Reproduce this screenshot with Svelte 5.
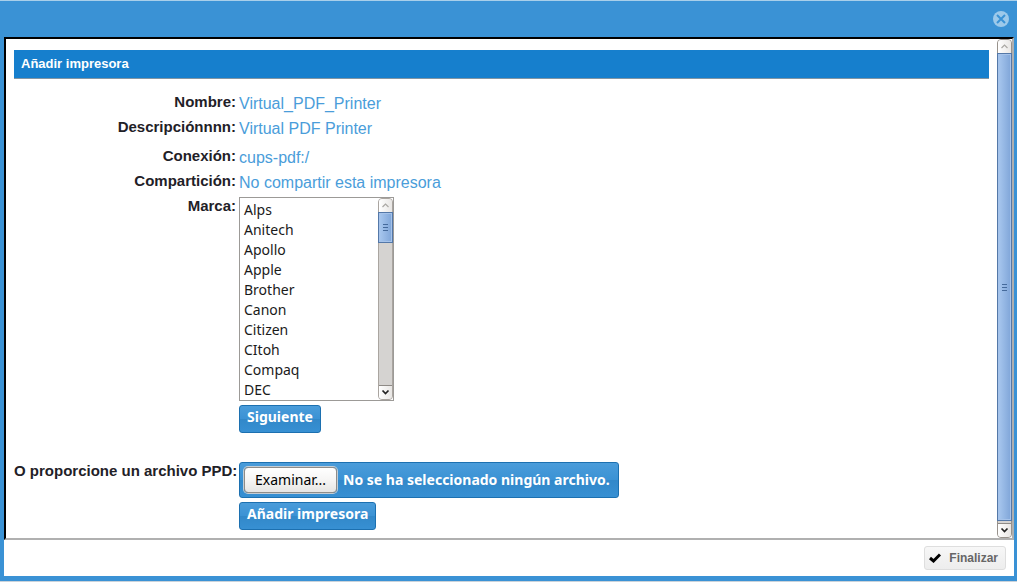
<script>
  const details = [
    { label: 'Nombre:', value: 'Virtual_PDF_Printer' },
    { label: 'Descripciónnnn:', value: 'Virtual PDF Printer', last: true },
    { label: 'Conexión:', value: 'cups-pdf:/' },
    { label: 'Compartición:', value: 'No compartir esta impresora' }
  ];
  const brands = ['Alps', 'Anitech', 'Apollo', 'Apple', 'Brother', 'Canon', 'Citizen', 'CItoh', 'Compaq', 'DEC'];
</script>

{#snippet scrollbar(kind)}
  <div class="scrollbar {kind}" aria-hidden="true">
    <div class="arrow up">
      <svg width="13" height="13" viewBox="0 0 13 13"><path d="M3.5 8 L6.5 5 L9.5 8" fill="none" stroke="#aaa8a4" stroke-width="1.2" /></svg>
    </div>
    <div class="track">
      <div class="thumb"><i></i><i></i><i></i></div>
    </div>
    <div class="arrow down">
      <svg width="13" height="13" viewBox="0 0 13 13"><path d="M3.5 4.5 L6.5 7.5 L9.5 4.5" fill="none" stroke="#222" stroke-width="1.7" /></svg>
    </div>
  </div>
{/snippet}

<div class="dialog">
  <header>
    <button class="close" type="button" aria-label="Cerrar">
      <svg width="16" height="16" viewBox="0 0 16 16">
        <circle cx="8" cy="8" r="8" fill="#9cc9ea" />
        <path d="M4 4 L12 12 M12 4 L4 12" stroke="#3a92d5" stroke-width="2" />
      </svg>
    </button>
  </header>

  <div class="frame">
    <main>
      <h1>Añadir impresora</h1>
      <form onsubmit={(e) => e.preventDefault()}>
        {#each details as row}
          <div class="row" class:last={row.last}>
            <span class="label">{row.label}</span>
            <span class="value">{row.value}</span>
          </div>
        {/each}
        <div class="row brand">
          <label class="label" for="marca">Marca:</label>
          <div class="field">
            <div class="listbox">
              <select id="marca" size="10">
                {#each brands as brand}
                  <option>{brand}</option>
                {/each}
              </select>
              {@render scrollbar('small')}
            </div>
            <button class="primary" type="button">Siguiente</button>
          </div>
        </div>
        <div class="row">
          <label class="label" for="ppd">O proporcione un archivo PPD:</label>
          <div class="field">
            <div class="file">
              <input id="ppd" type="file" />
              <span class="browse">Examinar...</span>
              <span>No se ha seleccionado ningún archivo.</span>
            </div>
            <button class="primary" type="submit">Añadir impresora</button>
          </div>
        </div>
      </form>
    </main>
    {@render scrollbar('large')}
  </div>

  <footer>
    <button class="finish" type="button">
      <svg width="12" height="10" viewBox="0 0 12 10"><path d="M1 5 L4.5 8 L11 1.5" fill="none" stroke="#000" stroke-width="3" /></svg>
      Finalizar
    </button>
  </footer>
</div>

<style>
  :global(body) {
    margin: 0;
    background: #c5d5e2;
  }

  * {
    box-sizing: border-box;
  }

  .dialog {
    display: flex;
    flex-direction: column;
    min-height: 100vh;
    padding: 0 3px 5px 4px;
    border-top: 1px solid #a9cfea;
    border-bottom: 1px solid #cbd3da;
    background: #3a92d5;
    font-family: 'Liberation Sans', Arial, sans-serif;
  }

  header {
    display: flex;
    justify-content: flex-end;
    align-items: center;
    height: 36px;
    padding-right: 5px;
  }

  .close {
    display: flex;
    padding: 0;
    border: 0;
    background: none;
  }

  .frame {
    display: flex;
    flex: 1;
    border: 2px solid;
    border-color: #000 #b0b0b0 #b0b0b0 #000;
    background: #fff;
  }

  main {
    flex: 1;
    min-width: 0;
    padding: 11px 8px 8px;
  }

  h1 {
    margin: 0 0 11px;
    padding: 0 7px;
    border-bottom: 1px solid #8295a3;
    background: #167fcd;
    color: #fff;
    font: bold 13px/28px 'Liberation Sans', Arial, sans-serif;
  }

  .row {
    display: grid;
    grid-template-columns: 222px 1fr;
    column-gap: 3px;
    line-height: 25px;
  }

  .row.last {
    margin-bottom: 4px;
  }

  .row.brand {
    margin-bottom: 26px;
  }

  .label {
    color: #1f2127;
    font-weight: bold;
    font-size: 15px;
    line-height: 23px;
    text-align: right;
    white-space: nowrap;
  }

  .value {
    padding-top: 2px;
    color: #4a9dda;
    font-size: 16px;
    line-height: 23px;
  }

  .field {
    display: flex;
    flex-direction: column;
    align-items: flex-start;
    gap: 4px;
    padding-top: 3px;
  }

  .listbox {
    display: flex;
    width: 155px;
    border: 1px solid #9c9a97;
    background: #fff;
  }

  select {
    flex: 1;
    min-width: 0;
    height: 202px;
    padding: 2px 0 0;
    border: 0;
    outline: 0;
    background: #fff;
    color: #1a1a1a;
    font: 14px 'Noto Sans', sans-serif;
    scrollbar-width: none;
    overflow: hidden;
  }

  option {
    min-height: 20px;
    padding: 0 4px;
    line-height: 20px;
  }

  .primary,
  .file {
    border: 1px solid #1c70b0;
    border-radius: 3px;
    background: linear-gradient(#4a9cda, #3b92d4 50%, #3288c9 51%, #3790d3);
    color: #fff;
    font: bold 14px/20px 'Noto Sans', sans-serif;
  }

  .primary {
    height: 28px;
    padding: 0 7px 4px;
  }

  .file {
    position: relative;
    display: flex;
    align-items: center;
    gap: 6px;
    height: 36px;
    padding: 0 8px 0 4px;
  }

  .file input {
    position: absolute;
    inset: 0;
    width: 100%;
    opacity: 0;
  }

  .browse {
    padding: 2px 10px;
    border: 1px solid #8e8c89;
    border-radius: 4px;
    background: linear-gradient(#fff, #f6f5f4 50%, #e6e5e3);
    box-shadow: 0 0 0 1px #c3cdd5;
    color: #000;
    font-weight: normal;
  }

  .scrollbar {
    display: flex;
    flex: none;
    flex-direction: column;
    width: 15px;
    border: 1px solid #98928c;
    border-radius: 4px;
    background: #d5d3d1;
  }

  .small {
    border-color: #aaa5a0;
  }

  .arrow {
    display: flex;
    height: 13px;
    background: linear-gradient(90deg, #fff, #e8e6e4);
  }

  .up {
    border-radius: 3px 3px 0 0;
  }

  .down {
    height: 14px;
    border-top: 1px solid #8e8a86;
    border-radius: 0 0 3px 3px;
  }

  .track {
    flex: 1;
    display: flex;
    flex-direction: column;
    margin: 0 -1px;
  }

  .thumb {
    display: flex;
    flex-direction: column;
    justify-content: center;
    align-items: center;
    gap: 2px;
    border: 1px solid #5478a8;
    background: linear-gradient(90deg, #a9c8ef, #7fa5d8);
    box-shadow: inset 0 0 0 1px #a6c3ea;
  }

  .thumb i {
    width: 5px;
    height: 1px;
    background: #456a9b;
  }

  .small .thumb {
    height: 31px;
  }

  .large .thumb {
    flex: 1;
    margin-bottom: 2px;
  }

  footer {
    display: flex;
    justify-content: flex-end;
    padding: 6px 8px;
    background: #fff;
  }

  .finish {
    display: flex;
    align-items: center;
    gap: 8px;
    height: 24px;
    padding: 0 7px 0 4px;
    border: 1px solid #dedede;
    border-radius: 3px;
    background: linear-gradient(#f7f7f7, #ededed);
    color: #666;
    font: bold 12px 'Liberation Sans', Arial, sans-serif;
  }
</style>
